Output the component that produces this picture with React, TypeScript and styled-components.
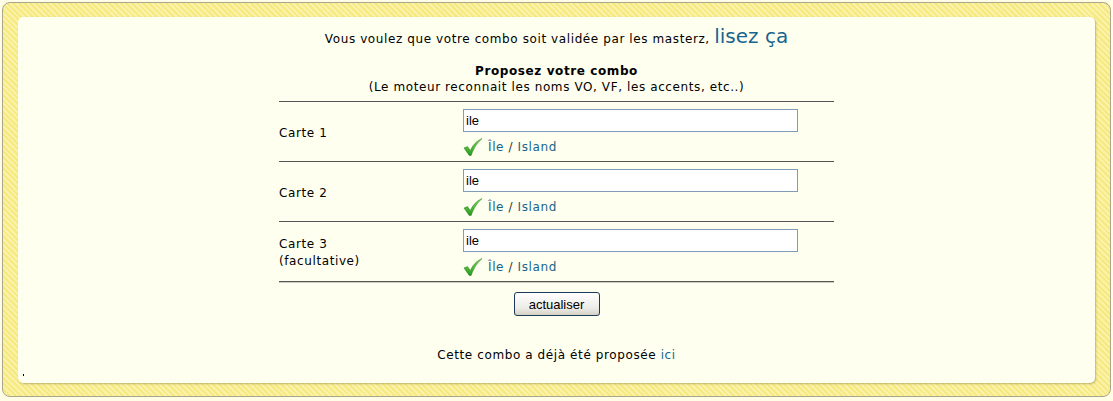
import React from 'react';
import styled, { createGlobalStyle } from 'styled-components';

const GlobalStyle = createGlobalStyle`
  html, body { margin: 0; padding: 0; background: #fffde6; }
  body {
    font-family: "DejaVu Sans", Verdana, sans-serif;
    font-size: 12px;
    letter-spacing: 0.6px;
    color: #000;
  }
`;

const Frame = styled.div`
  margin: 2px;
  height: 395px;
  box-sizing: border-box;
  border: 1px solid #a9a68c;
  border-radius: 8px;
  padding: 14px 15px 13px 15px;
  background: repeating-linear-gradient(45deg, #f6e97f 0 2px, #fbf2aa 2px 4px);
`;

const Panel = styled.div`
  position: relative;
  height: 100%;
  box-sizing: border-box;
  background: #fffff0;
  border-radius: 5px;
  box-shadow: 1px 1px 2px rgba(120, 110, 60, 0.45);
  padding-top: 3px;
  display: flex;
  flex-direction: column;
  align-items: center;
`;

const Intro = styled.p`
  margin: 0;
  line-height: 32px;
  text-align: center;
`;

const BigLink = styled.a`
  color: #17648e;
  font-size: 20px;
  letter-spacing: 0;
  text-decoration: none;
`;

const Heading = styled.div`
  margin-top: 8px;
  text-align: center;
  line-height: 16px;
`;

const Table = styled.div`
  margin-top: 6px;
  width: 555px;
  border-bottom: 1px solid #555;
  box-shadow: 0 1px 0 #cfcdbd;
`;

const Row = styled.div`
  display: grid;
  grid-template-columns: 184px 1fr;
  align-items: center;
  height: 59px;
  border-top: 1px solid #555;
`;

const Label = styled.div`
  line-height: 17px;
  padding-top: 3px;
`;

const Field = styled.div`
  align-self: start;
  display: flex;
  flex-direction: column;
  padding-top: 7px;
`;

const Input = styled.input`
  width: 335px;
  height: 23px;
  box-sizing: border-box;
  border: 1px solid #7f9db9;
  padding: 0 2px;
  font-family: "Liberation Sans", Arial, sans-serif;
  font-size: 13px;
  letter-spacing: 0;
  color: #000;
  background: #fff;
  outline: none;
`;

const Match = styled.div`
  display: flex;
  align-items: center;
  gap: 5px;
  height: 18px;
  margin-top: 6px;
  color: #333;
`;

const CardLink = styled.a`
  color: #17648e;
  text-decoration: none;
`;

const Button = styled.button`
  margin-top: 10px;
  width: 86px;
  height: 24px;
  border: 1px solid #1c3a5a;
  border-radius: 3px;
  background: linear-gradient(#ffffff, #ecebe6 70%, #d6d0c5);
  font-family: "Liberation Sans", Arial, sans-serif;
  font-size: 13px;
  letter-spacing: 0;
  color: #000;
  padding: 0;
`;

const Footer = styled.p`
  margin: 32px 0 0;
  text-align: center;
`;

const Dot = styled.span`
  position: absolute;
  left: 5px;
  bottom: 7px;
  width: 1px;
  height: 2px;
  background: #000;
`;

const Check = () => (
  <svg width="20" height="18" viewBox="0 0 20 18">
    <defs>
      <linearGradient id="ck" x1="0" y1="0" x2="0" y2="1">
        <stop offset="0" stopColor="#86dc5e" />
        <stop offset="1" stopColor="#249a1c" />
      </linearGradient>
    </defs>
    <path
      d="M1 10 L4.5 8.6 L7.3 12.4 C10 6.8 13.5 3 19 0.6 C14.5 4.6 11 9.6 8.2 17.4 L6.2 17.4 Z"
      fill="url(#ck)"
      stroke="#1a7a16"
      strokeWidth="0.5"
    />
  </svg>
);

const cards = [
  { label: ['Carte 1'] },
  { label: ['Carte 2'] },
  { label: ['Carte 3', '(facultative)'] },
];

export default function App() {
  return (
    <>
      <GlobalStyle />
      <Frame>
        <Panel>
          <Intro>
            Vous voulez que votre combo soit validée par les masterz, <BigLink href="#">lisez ça</BigLink>
          </Intro>
          <Heading>
            <b>Proposez votre combo</b>
            <br />
            (Le moteur reconnait les noms VO, VF, les accents, etc..)
          </Heading>
          <Table>
            {cards.map((c, i) => (
              <Row key={i}>
                <Label>
                  {c.label.map((l, j) => (
                    <div key={j}>{l}</div>
                  ))}
                </Label>
                <Field>
                  <Input defaultValue="ile" />
                  <Match>
                    <Check />
                    <span>
                      <CardLink href="#">Île</CardLink> / <CardLink href="#">Island</CardLink>
                    </span>
                  </Match>
                </Field>
              </Row>
            ))}
          </Table>
          <Button>actualiser</Button>
          <Footer>
            Cette combo a déjà été proposée <CardLink href="#">ici</CardLink>
          </Footer>
          <Dot />
        </Panel>
      </Frame>
    </>
  );
}
